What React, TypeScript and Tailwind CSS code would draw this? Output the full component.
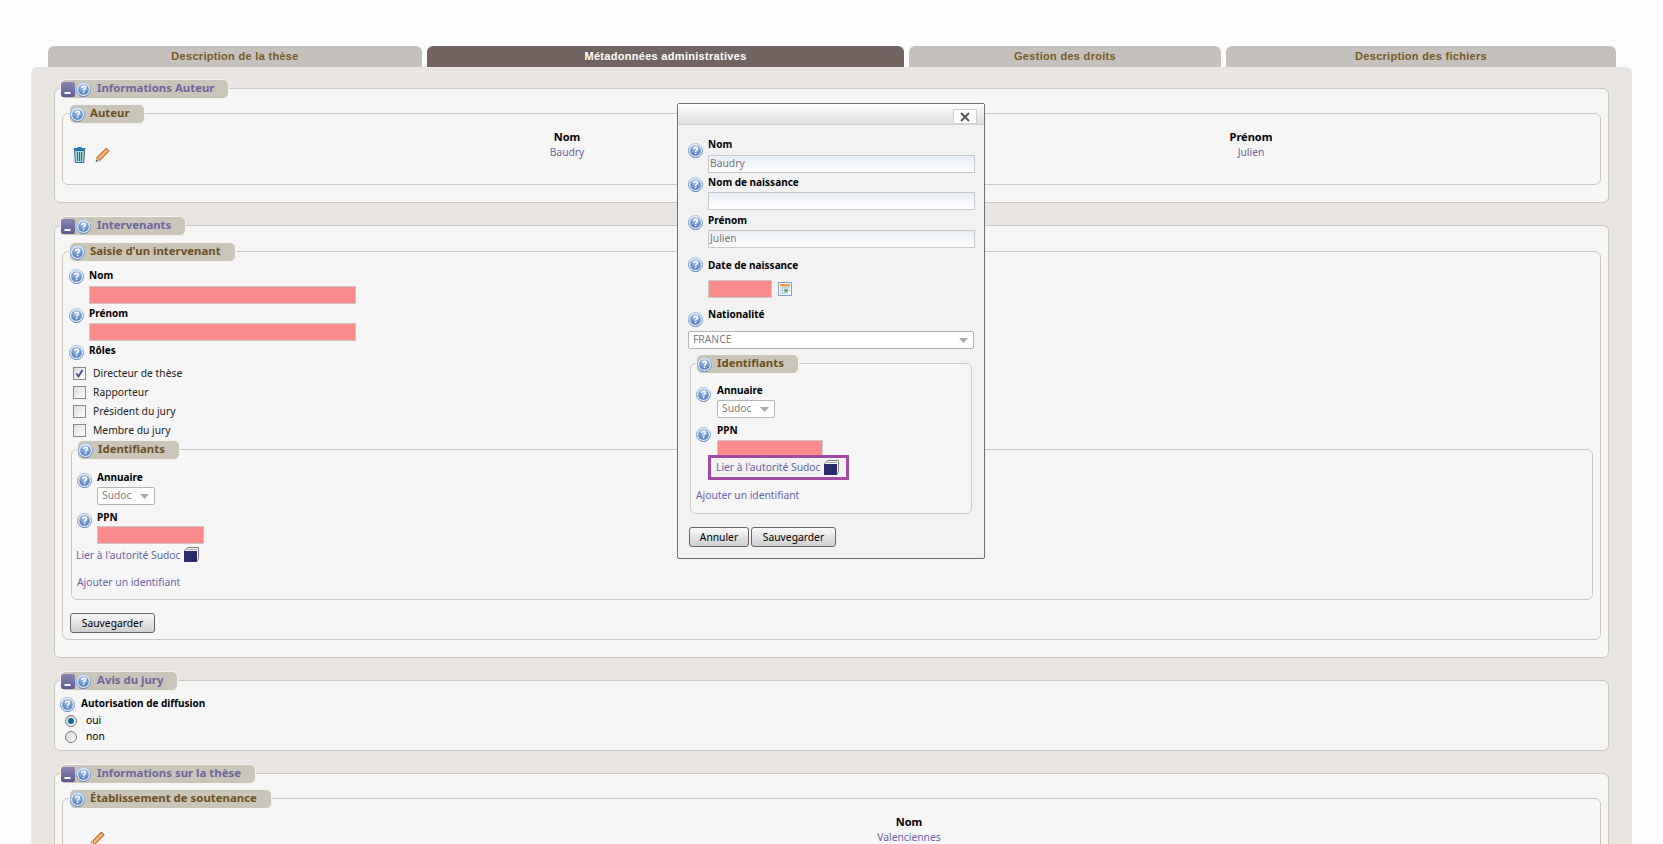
import React from "react";

const Help = ({ className = "" }: { className?: string }) => (
  <svg width="15" height="15" viewBox="0 0 15 15" className={"shrink-0 " + className}>
    <defs>
      <radialGradient id="hg" cx="50%" cy="30%" r="75%">
        <stop offset="0%" stopColor="#b4cdec" />
        <stop offset="100%" stopColor="#3f70b8" />
      </radialGradient>
      <linearGradient id="hr" x1="0" y1="0" x2="0" y2="1">
        <stop offset="0%" stopColor="#a9c3e2" />
        <stop offset="100%" stopColor="#4f7db8" />
      </linearGradient>
    </defs>
    <circle cx="7.500" cy="7.500" r="7" fill="#e6eef8" stroke="url(#hr)" strokeWidth="1" />
    <circle cx="7.500" cy="7.500" r="5.300" fill="url(#hg)" />
    <path d="M5.500 5.900c.2-1.200 1-1.700 2-1.700 1.200 0 2 .7 2 1.700 0 1.400-1.900 1.300-1.900 2.800" fill="none" stroke="#fff" strokeWidth="1.400" />
    <rect x="6.800" y="9.700" width="1.500" height="1.500" fill="#fff" />
  </svg>
);

const Minus = () => (
  <svg width="14" height="15" viewBox="0 0 14 15" className="shrink-0">
    <defs>
      <linearGradient id="mg" x1="0" y1="0" x2="0" y2="1">
        <stop offset="0%" stopColor="#8c87b6" />
        <stop offset="100%" stopColor="#5d5890" />
      </linearGradient>
    </defs>
    <rect width="14" height="15" rx="2" fill="url(#mg)" />
    <rect x="3.500" y="10" width="6" height="2" fill="#fff" />
  </svg>
);

const Trash = () => (
  <svg width="13" height="16" viewBox="0 0 13 16" className="shrink-0">
    <rect x="4.500" y="0" width="4" height="1.500" fill="#2c7fa8" />
    <rect x="0.500" y="1" width="12" height="2" rx="1" fill="#2480ae" />
    <path d="M1.500 3.500h10l-.8 12H2.300z" fill="#a8d6d4" stroke="#1e6f9e" />
    <path d="M4.500 5v9M6.500 5v9M8.500 5v9" stroke="#1e6f9e" />
  </svg>
);

const Pencil = () => (
  <svg width="15" height="16" viewBox="0 0 14 14" className="shrink-0">
    <path d="M10.500.8l2.600 2.400L4 12.300 1.400 10z" fill="#f3b478" stroke="#b96f2c" strokeWidth="1" />
    <path d="M1.400 10L.6 13.400 4 12.300z" fill="#f6dfc4" />
    <path d="M.5 13.500l1-2.200 1.200 1.200z" fill="#1d2d78" />
  </svg>
);

const Cube = () => (
  <svg width="15" height="15" viewBox="0 0 15 15" className="shrink-0">
    <path d="M0.500 4L3.500.5h11v11L13 14" fill="#fafafa" stroke="#7f7f7f" />
    <path d="M3 2.500h10" fill="none" stroke="#a8a8a8" />
    <rect x="0" y="4" width="13" height="11" fill="#2c2a6c" />
  </svg>
);

const Calendar = () => (
  <svg width="14" height="14" viewBox="0 0 14 14" className="shrink-0">
    <rect x="0.500" y="0.500" width="13" height="13" fill="#f4f8fc" stroke="#7ea2c8" />
    <rect x="2" y="2" width="10" height="2.500" fill="#ee9a4d" />
    <path d="M2 6h10M2 8.500h10M2 11h8M4.500 5v7M7 5v7M9.500 5v6" stroke="#a9bdd2" strokeWidth="0.800" />
    <rect x="6.500" y="7" width="3" height="3" fill="#68a868" />
  </svg>
);

const Arrow = () => (
  <svg width="9" height="5" viewBox="0 0 9 5" className="mt-[3px] shrink-0">
    <path d="M0 0h9L4.500 5z" fill="#a8a8a8" />
  </svg>
);

const Legend = ({ title, minus, outer, className = "" }: { title: string; minus?: boolean; outer?: boolean; className?: string }) => (
  <div className={"absolute -top-[10px] flex h-[20px] items-center whitespace-nowrap rounded-[6px] border border-[#f4f3f0] bg-[#c9c5b9] pr-[14px] text-[11.4px] font-bold [font-family:'Noto_Sans',sans-serif] " + (outer ? "text-[#6d65a2] " : "text-[#6e4f1c] ") + className}>
    {minus && <Minus />}
    <Help className={minus ? "ml-[1px]" : ""} />
    <span className={"mb-[2px] " + (minus ? "ml-[6px]" : "ml-[5px]")}>{title}</span>
  </div>
);

const Row = ({ label, icon = "mt-[0px]", labelClass = "ml-[5px]", className = "" }: { label: string; icon?: string; labelClass?: string; className?: string }) => (
  <div className={"flex h-[14px] items-start " + className}>
    <Help className={icon} />
    <span className={"text-[10px] font-bold leading-[14px] text-black [font-family:'Noto_Sans',sans-serif] " + labelClass}>{label}</span>
  </div>
);

const Input = ({ value, pink, className = "" }: { value?: string; pink?: boolean; className?: string }) => (
  <div className={"flex h-[18px] items-center border border-[#c9c9c9] pb-[2px] pl-[1px] text-[#77777b] " + (pink ? "bg-[#fb8a8a] " : "bg-linear-to-b from-[#e9eef7] to-white ") + className}>
    {value}
  </div>
);

const Select = ({ value, className = "" }: { value: string; className?: string }) => (
  <div className={"flex h-[18px] items-center justify-between rounded-[2px] border border-[#b5b5b5] bg-white pb-[2px] pl-[4px] pr-[5px] text-[#808080] " + className}>
    <span>{value}</span>
    <Arrow />
  </div>
);

const Button = ({ label, className = "" }: { label: string; className?: string }) => (
  <button className={"flex h-[20px] items-center justify-center rounded-[3px] border border-[#666] bg-linear-to-b from-[#fafafa] to-[#cfcfcf] text-black " + className}>
    {label}
  </button>
);

const Link = ({ children, className = "" }: { children: React.ReactNode; className?: string }) => (
  <div className={"text-[#6a64a6] " + className}>{children}</div>
);

const Check = ({ label, checked }: { label: string; checked?: boolean }) => (
  <div className="flex h-[19px] items-center">
    <div className="flex h-[13px] w-[13px] items-center justify-center border border-[#8a8a8a] bg-linear-to-br from-[#dcdcdc] to-white">
      {checked && (
        <svg width="9" height="9" viewBox="0 0 9 9">
          <path d="M1.500 4.500l2 3L7.500 1" fill="none" stroke="#4d4f9a" strokeWidth="1.800" />
        </svg>
      )}
    </div>
    <span className="mb-[2px] ml-[7px] text-[#222]">{label}</span>
  </div>
);

const Radio = ({ label, on }: { label: string; on?: boolean }) => (
  <div className="flex h-[16px] items-center pl-[5px]">
    <div className="flex h-[12px] w-[12px] items-center justify-center rounded-full border border-[#777] bg-linear-to-br from-[#d5d5d5] to-white">
      {on && <div className="h-[6px] w-[6px] rounded-full bg-[#0a6d9c]" />}
    </div>
    <span className="mb-[2px] ml-[9px] text-black">{label}</span>
  </div>
);

const Fieldset = ({ className = "", children }: { className?: string; children: React.ReactNode }) => (
  <div className={"relative rounded-[6px] border border-[#cbc8bc] bg-[#f6f6f6] " + className}>{children}</div>
);

const Cell = ({ head, value }: { head: string; value: string }) => (
  <div className="flex flex-col items-center">
    <div className="h-[16px] text-[11px] font-bold leading-[15px] text-black [font-family:'Noto_Sans',sans-serif]">{head}</div>
    <div className="text-[#6a64a6]">{value}</div>
  </div>
);

export default function App() {
  return (
    <div className="relative h-[844px] w-full overflow-hidden bg-[#fdfdfd] text-[10.3px] leading-[14px] [font-family:'Noto_Sans',sans-serif]">
      <div className="flex h-[67px] gap-[5px] pl-[48px] pt-[46px] text-[11px] font-bold tracking-[0.3px] [font-family:'Liberation_Sans',sans-serif]">
        <div className="flex w-[374px] items-center justify-center rounded-t-[6px] bg-[#c5c1bf] pb-[1px] text-[#785a22]">Description de la thèse</div>
        <div className="flex w-[477px] items-center justify-center rounded-t-[6px] bg-[#726561] pb-[1px] text-white">Métadonnées administratives</div>
        <div className="flex w-[312px] items-center justify-center rounded-t-[6px] bg-[#c5c1bf] pb-[1px] text-[#785a22]">Gestion des droits</div>
        <div className="flex w-[390px] items-center justify-center rounded-t-[6px] bg-[#c5c1bf] pb-[1px] text-[#785a22]">Description des fichiers</div>
      </div>

      <div className="ml-[31px] mr-[31px] flex flex-col gap-[22px] rounded-t-[6px] bg-[#e8e5e3] px-[23px] pb-[20px] pt-[21px]">
        {/* Informations Auteur */}
        <Fieldset className="h-[115px] px-[7px] pt-[24px]">
          <Legend title="Informations Auteur" minus outer className="left-[5px]" />
          <Fieldset className="h-[72px]">
            <Legend title="Auteur" className="left-[6px]" />
            <div className="grid grid-cols-[162px_684px_684px] pt-[15px]">
              <div className="flex items-start gap-[9px] pl-[10px] pt-[18px]">
                <Trash />
                <Pencil />
              </div>
              <Cell head="Nom" value="Baudry" />
              <Cell head="Prénom" value="Julien" />
            </div>
          </Fieldset>
        </Fieldset>

        {/* Intervenants */}
        <Fieldset className="px-[7px] pb-[17px] pt-[25px]">
          <Legend title="Intervenants" minus outer className="left-[5px]" />
          <Fieldset className="pb-[6px] pl-[6px] pt-[16px]">
            <Legend title="Saisie d'un intervenant" className="left-[6px]" />
            <Row label="Nom" icon="mt-[1px]" />
            <Input pink className="ml-[20px] mt-[4px] w-[267px]" />
            <Row label="Prénom" icon="mt-[2px]" className="mt-[2px]" />
            <Input pink className="ml-[20px] mt-[3px] w-[267px]" />
            <Row label="Rôles" icon="mt-[2px]" className="mt-[2px]" />
            <div className="ml-[4px] mt-[7px] flex flex-col">
              <Check label="Directeur de thèse" checked />
              <Check label="Rapporteur" />
              <Check label="Président du jury" />
              <Check label="Membre du jury" />
            </div>
            <Fieldset className="ml-[2px] mr-[7px] mt-[9px] pb-[10px] pl-[4px] pt-[20px]">
              <Legend title="Identifiants" className="left-[5px]" />
              <Row label="Annuaire" icon="mt-[3px]" className="pl-[1px]" />
              <Select value="Sudoc" className="ml-[21px] mt-[3px] w-[58px]" />
              <Row label="PPN" icon="mt-[3px]" className="mt-[5px] pl-[1px]" />
              <Input pink className="ml-[21px] mt-[2px] w-[107px]" />
              <Link className="mt-[3px] flex h-[15px] items-center">
                <span>Lier à l'autorité Sudoc</span>
                <span className="ml-[3px]"><Cube /></span>
              </Link>
              <Link className="mt-[13px] pl-[1px]">Ajouter un identifiant</Link>
            </Fieldset>
            <Button label="Sauvegarder" className="ml-[1px] mt-[13px] w-[85px]" />
          </Fieldset>
        </Fieldset>

        {/* Avis du jury */}
        <Fieldset className="h-[71px] pl-[5px] pt-[15px]">
          <Legend title="Avis du jury" minus outer className="left-[5px]" />
          <Row label="Autorisation de diffusion" icon="mt-[1px]" labelClass="ml-[6px]" />
          <div className="mt-[3px] flex flex-col">
            <Radio label="oui" on />
            <Radio label="non" />
          </div>
        </Fieldset>

        {/* Informations sur la thèse */}
        <Fieldset className="h-[200px] px-[7px] pt-[24px]">
          <Legend title="Informations sur la thèse" minus outer className="left-[5px]" />
          <Fieldset className="h-[150px]">
            <Legend title="Établissement de soutenance" className="left-[6px]" />
            <div className="grid grid-cols-[162px_1368px] pt-[15px]">
              <div className="pl-[27px] pt-[17px]"><Pencil /></div>
              <Cell head="Nom" value="Valenciennes" />
            </div>
          </Fieldset>
        </Fieldset>
      </div>

      {/* Dialog */}
      <div className="absolute left-[677px] top-[103px] h-[456px] w-[308px] rounded-[2px] border border-[#707070] bg-[#f2f2f2]">
        <div className="flex h-[21px] items-start justify-end border-b border-[#d0d0d0] bg-linear-to-b from-white to-[#dedede] pr-[7px] pt-[5px]">
          <div className="flex h-[15px] w-[24px] items-center justify-center border border-[#cfcfcf] bg-white">
            <svg width="10" height="10" viewBox="0 0 10 10">
              <path d="M1 1l8 8M9 1L1 9" stroke="#555" strokeWidth="2" />
            </svg>
          </div>
        </div>
        <div className="pl-[10px] pt-[12px]">
          <Row label="Nom" icon="mt-[6px]" />
          <Input value="Baudry" className="ml-[20px] mt-[4px] w-[267px]" />
          <Row label="Nom de naissance" icon="mt-[2px]" className="mt-[2px]" />
          <Input className="ml-[20px] mt-[3px] w-[267px]" />
          <Row label="Prénom" icon="mt-[2px]" className="mt-[3px]" />
          <Input value="Julien" className="ml-[20px] mt-[3px] w-[267px]" />
          <Row label="Date de naissance" icon="-mt-[1px]" className="mt-[10px]" />
          <div className="ml-[20px] mt-[8px] flex items-center gap-[6px]">
            <Input pink className="w-[64px]" />
            <Calendar />
          </div>
          <Row label="Nationalité" icon="mt-[5px]" className="mt-[9px]" />
          <Select value="FRANCE" className="mt-[10px] w-[286px]" />
          <Fieldset className="ml-[2px] mt-[14px] h-[151px] w-[282px] border-[#cfccc4] bg-[#f2f2f2] pl-[5px] pt-[19px]">
            <Legend title="Identifiants" className="left-[5px]" />
            <Row label="Annuaire" icon="mt-[4px]" labelClass="ml-[6px]" />
            <Select value="Sudoc" className="ml-[21px] mt-[3px] w-[58px]" />
            <Row label="PPN" icon="mt-[4px]" labelClass="ml-[6px]" className="mt-[5px]" />
            <Input pink className="ml-[21px] mt-[3px] w-[106px]" />
            <div className="relative z-10 -mt-[3px] ml-[12px] flex h-[25px] w-[141px] items-center border-[3px] border-[#a04aa6] bg-[#f2f2f2] pb-[1px] pl-[5px]">
              <Link>Lier à l'autorité Sudoc</Link>
              <span className="ml-[3px]"><Cube /></span>
            </div>
            <Link className="mt-[8px]">Ajouter un identifiant</Link>
          </Fieldset>
          <div className="mt-[13px] flex gap-[2px] pl-[1px]">
            <Button label="Annuler" className="w-[60px]" />
            <Button label="Sauvegarder" className="w-[85px]" />
          </div>
        </div>
      </div>
    </div>
  );
}
